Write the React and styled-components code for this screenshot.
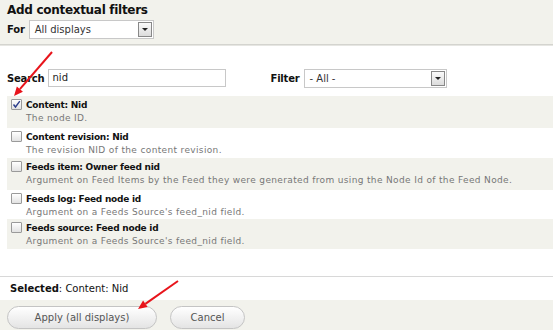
import React from "react";
import styled, { createGlobalStyle } from "styled-components";

const Global = createGlobalStyle`
  html, body { margin: 0; padding: 0; background: #fff; }
  body { font-family: "DejaVu Sans", Verdana, sans-serif; color: #222; }
  * { box-sizing: border-box; }
`;

const Page = styled.div`
  position: relative;
  width: 553px;
  height: 330px;
  display: flex;
  flex-direction: column;
  overflow: hidden;
`;

const Header = styled.div`
  height: 45px;
  background: #f2f2ec;
  border-bottom: 1px solid #d4d4cf;
  box-shadow: 0 1px 0 #e6e6e2;
  padding: 2px 7px 0;
`;

const Title = styled.h1`
  margin: 0;
  font-size: 12px;
  font-weight: bold;
  line-height: 16px;
  letter-spacing: -0.3px;
  color: #111;
`;

const FieldRow = styled.div`
  display: flex;
  align-items: center;
  gap: ${(p) => p.gap || 4}px;
`;

const ForRow = styled(FieldRow)`
  margin-top: 2px;
`;

const Label = styled.label`
  font-size: 10px;
  font-weight: bold;
  letter-spacing: -0.2px;
  color: #111;
`;

const SelectBox = styled.div`
  width: ${(p) => p.width}px;
  height: 19px;
  border: 1px solid #c8c8c8;
  background: #fff;
  display: flex;
  align-items: center;
  justify-content: space-between;
  padding: 0 1px 0 5px;
  font-size: 10px;
  color: #333;
`;

const SelectArrow = styled.span`
  width: 14px;
  height: 15px;
  border: 1px solid #888;
  background: linear-gradient(#fafafa, #dcdcdc);
  display: flex;
  align-items: center;
  justify-content: center;
  &::after {
    content: "";
    border-left: 3px solid transparent;
    border-right: 3px solid transparent;
    border-top: 3px solid #222;
  }
`;

const Body = styled.div`
  flex: 1;
  padding-top: 23px;
`;

const SearchRow = styled.div`
  display: flex;
  align-items: center;
  padding: 0 7px;
  height: 20px;
`;

const TextInput = styled.div`
  width: 178px;
  height: 18px;
  margin-left: 3px;
  border: 1px solid #c8c8c8;
  padding: 0 4px;
  font-size: 10px;
  line-height: 16px;
  color: #222;
`;

const FilterGroup = styled(FieldRow)`
  margin-left: 45px;
`;

const List = styled.ul`
  list-style: none;
  margin: 8px 0 0 7px;
  padding: 0;
`;

const Item = styled.li`
  background: ${(p) => (p.shaded ? "#f2f2ec" : "#fff")};
  height: ${(p) => p.h}px;
  padding: 2px 0 0 4px;
  display: flex;
  gap: 4px;
`;

const Check = styled.span`
  flex: none;
  width: 11px;
  height: 11px;
  margin-top: 1px;
  border: 1px solid #9a9a9a;
  border-radius: 1px;
  background: linear-gradient(#ffffff, #e2e2e2);
  display: flex;
  align-items: center;
  justify-content: center;
`;

const ItemText = styled.div`
  display: flex;
  flex-direction: column;
  padding-top: 1px;
`;

const ItemTitle = styled.span`
  font-size: 9px;
  font-weight: bold;
  line-height: 13px;
  letter-spacing: -0.25px;
  color: #111;
`;

const ItemDesc = styled.span`
  font-size: 9px;
  line-height: 13px;
  letter-spacing: 0.35px;
  color: #777;
`;

const SelectedBar = styled.div`
  height: 24px;
  border-top: 1px solid #d8d8d8;
  padding: 0 10px;
  display: flex;
  align-items: center;
  font-size: 10px;
  color: #111;
  b { font-weight: bold; }
`;

const Footer = styled.div`
  height: 30px;
  background: #f2f2ec;
  display: flex;
  align-items: flex-start;
  gap: 13px;
  padding: 6px 7px 0;
`;

const Button = styled.button`
  width: ${(p) => p.width}px;
  height: 23px;
  border: 1px solid #c4c4c4;
  border-radius: 12px;
  background: linear-gradient(#ffffff, #e4e4e4);
  font-family: inherit;
  font-size: 10px;
  color: #555;
  padding: 0;
`;

const Overlay = styled.svg`
  position: absolute;
  left: 0;
  top: 0;
  pointer-events: none;
`;

const items = [
  { title: "Content: Nid", desc: "The node ID.", checked: true, h: 32 },
  { title: "Content revision: Nid", desc: "The revision NID of the content revision.", h: 30 },
  {
    title: "Feeds item: Owner feed nid",
    desc: "Argument on Feed Items by the Feed they were generated from using the Node Id of the Feed Node.",
    h: 32,
  },
  { title: "Feeds log: Feed node id", desc: "Argument on a Feeds Source's feed_nid field.", h: 29 },
  { title: "Feeds source: Feed node id", desc: "Argument on a Feeds Source's feed_nid field.", h: 30 },
];

const Arrow = ({ x1, y1, x2, y2 }) => {
  const a = Math.atan2(y2 - y1, x2 - x1);
  const len = 9;
  const w = 4;
  const bx = x2 - Math.cos(a) * len;
  const by = y2 - Math.sin(a) * len;
  const px = -Math.sin(a) * w;
  const py = Math.cos(a) * w;
  return (
    <g>
      <line x1={x1} y1={y1} x2={bx} y2={by} stroke="#e8141b" strokeWidth="2" />
      <polygon points={`${x2},${y2} ${bx + px},${by + py} ${bx - px},${by - py}`} fill="#e8141b" />
    </g>
  );
};

export default function App() {
  return (
    <Page>
      <Global />
      <Header>
        <Title>Add contextual filters</Title>
        <ForRow>
          <Label>For</Label>
          <SelectBox width={125}>
            All displays
            <SelectArrow />
          </SelectBox>
        </ForRow>
      </Header>
      <Body>
        <SearchRow>
          <Label>Search</Label>
          <TextInput>nid</TextInput>
          <FilterGroup gap={4}>
            <Label>Filter</Label>
            <SelectBox width={143}>
              - All -
              <SelectArrow />
            </SelectBox>
          </FilterGroup>
        </SearchRow>
        <List>
          {items.map((it, i) => (
            <Item key={it.title} shaded={i % 2 === 0} h={it.h}>
              <Check>
                {it.checked && (
                  <svg width="9" height="9" viewBox="0 0 9 9">
                    <path d="M1.5 4.5 L3.5 7 L7.8 1.2" fill="none" stroke="#2c3e8c" strokeWidth="1.4" />
                  </svg>
                )}
              </Check>
              <ItemText>
                <ItemTitle>{it.title}</ItemTitle>
                <ItemDesc>{it.desc}</ItemDesc>
              </ItemText>
            </Item>
          ))}
        </List>
      </Body>
      <SelectedBar>
        <span>
          <b>Selected</b>: Content: Nid
        </span>
      </SelectedBar>
      <Footer>
        <Button width={150}>Apply (all displays)</Button>
        <Button width={75}>Cancel</Button>
      </Footer>
      <Overlay width="553" height="330">
        <Arrow x1={52} y1={52} x2={14} y2={96} />
        <Arrow x1={178} y1={281} x2={138} y2={309} />
      </Overlay>
    </Page>
  );
}
